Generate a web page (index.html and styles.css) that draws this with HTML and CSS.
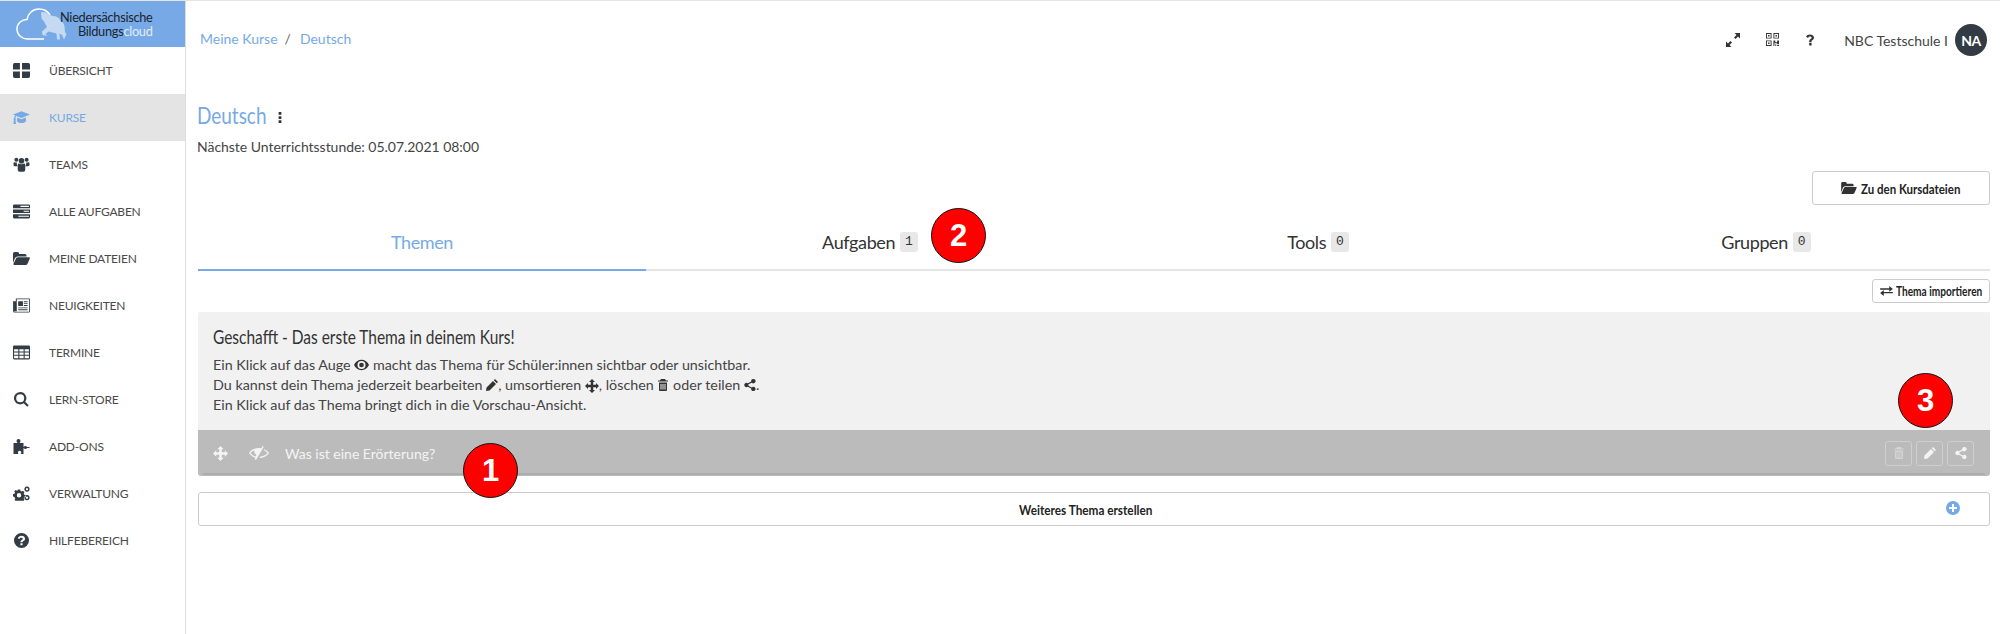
FILE: index.html
```html
<!DOCTYPE html>
<html lang="de">
<head>
<meta charset="utf-8">
<title>Deutsch</title>
<link rel="stylesheet" href="styles.css">
</head>
<body>
<div class="app">
  <aside class="sidebar">
    <div class="logo">
      <svg class="logo-mark" viewBox="0 0 52 32"><path class="cloud" d="M34 7C31.500 3 27.500 1 23 1 16.500 1 12 5.500 11 11.500 5.500 11.500 1 15.500 1 21 1 27 6 31 11.500 31H28"/><path class="horse" d="M25 4l5 .5 4 2.500 3 1c3.500 0 6 1.500 8 5 2 1 3 3 3.500 5l.5 6 1.500 2-2.500 5.500-2-4.500-2.500-1.500 .5 6-3 0-.5-6-8-2-3 2.500 2 2-5-1-.5-3.500 5-4.500-3-5.500-2.500-3z"/></svg>
      <div class="logo-text"><span>Niedersächsische</span><span>Bildungs<em>cloud</em></span></div>
    </div>
    <nav class="nav">
      <a class="nav-item"><svg class="nav-ico" viewBox="0 0 16 14"><path d="M0 1.500q0-1.500 1.500-1.500h5v6H0zM8.500 0h6q1.500 0 1.500 1.500V6H8.500zM0 8h6.500v6h-5Q0 14 0 12.500zM8.500 8H16v4.500q0 1.500-1.500 1.500h-6z"/></svg>ÜBERSICHT</a>
      <a class="nav-item active"><svg class="nav-ico" viewBox="0 0 20 15"><path d="M10 0l10 4-10 4-6-2.400q-1 1-1.200 2.800.6.500.6 1.100 0 .5-.4.900l.5 4.600H.5L1 10.400Q.6 10 .6 9.500q0-.7.7-1.100Q1.500 6.200 2.700 5L0 4zM5 7.600l5 2 5-2 .4 3.900C15 13 12.500 14 10 14s-5-1-5.400-2.500z"/></svg>KURSE</a>
      <a class="nav-item"><svg class="nav-ico" viewBox="0 0 17 16"><circle cx="3" cy="3" r="2.100"/><circle cx="14" cy="3" r="2.100"/><circle cx="8.500" cy="4" r="3"/><path d="M0 6.500q0-1 1-1 1.200.6 2.500.3-.3 3 1 4H1.500Q0 9.800 0 8.500zM17 6.500q0-1-1-1-1.200.6-2.500.3.300 3-1 4h2.500q2 0 2-1.300zM4.500 8.500q0-1.500 1.200-1.500 2.800 1.600 5.600 0 1.200 0 1.200 1.500v5q0 2-2 2.300H6.500q-2-.3-2-2.300z"/></svg>TEAMS</a>
      <a class="nav-item"><svg class="nav-ico" viewBox="0 0 16 13"><path d="M1 0h14q1 0 1 1v2.500H0V1q0-1 1-1zM0 4.500h16V8H0zM0 9h16v3q0 1-1 1H1q-1 0-1-1z"/><path class="cut" d="M7 1.200h8v1H7zM10 5.800h5v1h-5zM5 10.500h10v1H5z"/></svg>ALLE AUFGABEN</a>
      <a class="nav-item"><svg class="nav-ico" viewBox="0 0 17 13"><path d="M0 11V1.500Q0 0 1.500 0h3Q6 0 6 1.500V2h6q1.500 0 1.500 1.500V4.500H4.500Q3 4.500 2 6zM3.200 6q.6-.7 1.500-.7H16q1.300 0 .8 1.200l-2.300 5.200q-.5 1.300-1.800 1.300H1.500Q0 13 .5 11.800z"/></svg>MEINE DATEIEN</a>
      <a class="nav-item"><svg class="nav-ico" viewBox="0 0 18 15"><path fill-rule="evenodd" d="M3 0h14q1 0 1 1v12.500q0 1.500-1.500 1.500h-15Q0 15 0 13.500V3h3zM4 1v12.500H1V4H.9v9.500q0 .6.600.6h15q.6 0 .6-.6V1zM5.500 3h5v5h-5zM11.500 3h4v1h-4zM11.500 5h4v1h-4zM11.500 7h4v1h-4zM5.500 9.500h10v1h-10zM5.500 11.500h10v1h-10z"/></svg>NEUIGKEITEN</a>
      <a class="nav-item"><svg class="nav-ico" viewBox="0 0 16 13"><path fill-rule="evenodd" d="M1 0h14q1 0 1 1v11q0 1-1 1H1q-1 0-1-1V1q0-1 1-1zM1 3.500V5.500h4V3.500zM6 3.500V5.500h4V3.500zM11 3.500V5.500h4V3.500zM1 6.500V8.500h4V6.500zM6 6.500V8.500h4V6.500zM11 6.500V8.500h4V6.500zM1 9.500V12h4V9.500zM6 9.500V12h4V9.500zM11 9.500V12h4V9.500z"/></svg>TERMINE</a>
      <a class="nav-item"><svg class="nav-ico" viewBox="0 0 15 15"><path fill-rule="evenodd" d="M6.200 0a6.200 6.200 0 0 1 5 9.800l3.500 3.500-1.500 1.500-3.500-3.500A6.200 6.200 0 1 1 6.200 0zm0 2.200a4 4 0 1 0 0 8 4 4 0 0 0 0-8z"/></svg>LERN-STORE</a>
      <a class="nav-item"><svg class="nav-ico" viewBox="0 0 16 15"><path d="M0 4h4Q3 3 3 2a2 2 0 0 1 4 0q0 1-1 2h4v4q1-1 2-1 1 0 1.500 1H16v1h-2.500q-.5 1-1.500 1-1 0-2-1v6H7q.8-.8.800-1.500a1.700 1.700 0 0 0-3.400 0Q4.400 14 5 15H0z"/></svg>ADD-ONS</a>
      <a class="nav-item"><svg class="nav-ico" viewBox="0 0 17 14"><path fill-rule="evenodd" d="M5 3h2.200l.3 1.500 1.200.5 1.300-.8 1.500 1.500-.8 1.300.5 1.200 1.500.3v2.200l-1.500.3-.5 1.200.8 1.300-1 .8H2.500l-1-1 .8-1.200-.5-1.200L0 9.800V7.600l1.500-.3.500-1.200L1.200 5l1.500-1.500 1.300.8.700-.5zM6 6.500a2.200 2.200 0 1 0 0 4.400 2.200 2.200 0 0 0 0-4.400zM14 0a2.600 2.600 0 1 1-.01 0zm0 1.500a1.100 1.100 0 1 0 .01 0zM14 8.500a2.600 2.600 0 1 1-.01 0zm0 1.500a1.100 1.100 0 1 0 .01 0z"/></svg>VERWALTUNG</a>
      <a class="nav-item"><svg class="nav-ico" viewBox="0 0 14 14"><path fill-rule="evenodd" d="M7 0a7 7 0 1 1 0 14A7 7 0 0 1 7 0zM6 9.500v2h2v-2zM7 2.500C5.300 2.500 4 3.300 3.500 4.800l1.500.9C5.400 4.800 6 4.400 6.900 4.400c.8 0 1.300.4 1.300 1 0 .6-.5.900-1.200 1.300C6.300 7.100 6 7.600 6 8.700h2c0-.6.300-.8 1-1.200.9-.6 1.300-1.200 1.300-2.200 0-1.700-1.500-2.800-3.300-2.800z"/></svg>HILFEBEREICH</a>
    </nav>
  </aside>

  <main class="main">
    <header class="topbar">
      <div class="crumbs"><a>Meine Kurse</a><span class="sep">/</span><a>Deutsch</a></div>
      <div class="top-actions">
        <svg class="top-ico exp" viewBox="0 0 14 14"><path d="M8.500 0H14v5.500L12 3.500 9.500 6 8 4.500 10.500 2zM0 14V8.500L2 10.500 4.500 8 6 9.500 3.500 12 5.500 14z"/></svg>
        <svg class="top-ico qr" viewBox="0 0 14 14"><path fill-rule="evenodd" d="M0 0h6v6H0zM1 1v4h4V1zM2.200 2.200h1.600v1.600H2.200zM8 0h6v6H8zM9 1v4h4V1zM10.200 2.200h1.600v1.600h-1.600zM0 8h6v6H0zM1 9v4h4V9zM2.200 10.200h1.600v1.600H2.200zM8 8h2v2h2V8h2v4h-2v-1H9v3H8zM10 12h1v2h-1zM12 13h2v1h-2z"/></svg>
        <svg class="top-ico q" viewBox="0 0 10 14"><path d="M4 10.500h3V14H4zM5 0c3 0 5 1.700 5 4 0 1.800-1 2.700-2.200 3.400-.7.500-.9.800-.9 2H4c0-2 .5-2.900 1.800-3.700.9-.6 1.200-1 1.200-1.600 0-.8-.7-1.400-1.800-1.400-1.200 0-2 .6-2.600 1.800L0 2.800C1 1 2.700 0 5 0z"/></svg>
        <span class="school">NBC Testschule I</span>
        <span class="avatar">NA</span>
      </div>
    </header>

    <section class="course-head">
      <h1 class="course-title"><span class="narrow title-text">Deutsch</span><svg class="dots" viewBox="0 0 4 12"><path d="M.5 0h3v3h-3zM.5 4.500h3v3h-3zM.5 9h3v3h-3z"/></svg></h1>
      <p class="next-lesson">Nächste Unterrichtsstunde: 05.07.2021 08:00</p>
    </section>

    <div class="file-row">
      <a class="btn btn-files"><svg class="btn-ico" viewBox="0 0 17 13"><path d="M0 11V1.500Q0 0 1.500 0h3Q6 0 6 1.500V2h6q1.500 0 1.500 1.500V4.500H4.500Q3 4.500 2 6zM3.200 6q.6-.7 1.500-.7H16q1.300 0 .8 1.200l-2.300 5.200q-.5 1.300-1.800 1.300H1.500Q0 13 .5 11.800z"/></svg><span class="narrow files-text">Zu den Kursdateien</span></a>
    </div>

    <div class="tabs">
      <a class="tab active">Themen</a>
      <a class="tab">Aufgaben<span class="count">1</span></a>
      <a class="tab">Tools<span class="count">0</span></a>
      <a class="tab">Gruppen<span class="count">0</span></a>
    </div>

    <div class="import-row">
      <a class="btn btn-import"><svg class="btn-ico sm" viewBox="0 0 14 11"><path d="M0 2.500h10V0l4 3.200-4 3.200V4H0zM14 6.500H4V4.300L0 7.800l4 3.200V8h10z"/></svg><span class="narrow import-text">Thema importieren</span></a>
    </div>

    <section class="hint">
      <h2 class="hint-title"><span class="narrow">Geschafft - Das erste Thema in deinem Kurs!</span></h2>
      <p class="hint-line">Ein Klick auf das Auge <svg class="inl eye" viewBox="0 0 16 11"><path fill-rule="evenodd" d="M8 0c3.500 0 6.500 2.200 8 5.500C14.500 8.800 11.500 11 8 11S1.500 8.800 0 5.500C1.500 2.200 4.500 0 8 0zM8 1.200a4.300 4.300 0 1 0 0 8.600 4.300 4.300 0 0 0 0-8.600zM8 3a2.500 2.500 0 1 1 0 5 2.500 2.500 0 0 1 0-5z"/></svg> macht das Thema für Schüler:innen sichtbar oder unsichtbar.</p>
      <p class="hint-line">Du kannst dein Thema jederzeit bearbeiten <svg class="inl" viewBox="0 0 12 12"><path d="M9 0l3 3-1.200 1.200-3-3zM7 2l3 3-6.500 6.500L0 12l.5-3.500z"/></svg>, umsortieren <svg class="inl move" viewBox="0 0 14 14"><path d="M7 0l3 3H8.200v2.800H11V4l3 3-3 3V8.200H8.200V11H10l-3 3-3-3h1.800V8.200H3V10L0 7l3-3v1.800h2.800V3H4z"/></svg>, löschen <svg class="inl" viewBox="0 0 10 12"><path fill-rule="evenodd" d="M3 0h4l1 1.500h2v1H0v-1h2zM1 3.500h8V11q0 1-1 1H2q-1 0-1-1zM2.500 5v5.500h1V5zM4.500 5v5.500h1V5zM6.500 5v5.500h1V5z"/></svg> oder teilen <svg class="inl" viewBox="0 0 12 12"><path d="M9.500 0a2.200 2.200 0 1 1-1.700 3.700L4.400 5.300a2 2 0 0 1 0 1.400l3.400 1.700a2.200 2.200 0 1 1-.6 1.100L3.800 7.800a2.200 2.200 0 1 1 0-3.600l3.400-1.700A2.200 2.200 0 0 1 9.500 0z"/></svg>.</p>
      <p class="hint-line">Ein Klick auf das Thema bringt dich in die Vorschau-Ansicht.</p>
    </section>

    <div class="topic">
      <svg class="topic-move" viewBox="0 0 14 14"><path d="M7 0l3 3H8.200v2.800H11V4l3 3-3 3V8.200H8.200V11H10l-3 3-3-3h1.800V8.200H3V10L0 7l3-3v1.800h2.800V3H4z"/></svg>
      <svg class="topic-eye" viewBox="0 0 20 14"><path fill-rule="evenodd" d="M13.500 0l1.300.8L7 14l-1.300-.8.700-1.300C3.500 10.800 1.300 9 0 7c1.800-3 5.600-5 10-5 .9 0 1.800.1 2.600.3zM5.500 4.500C3.700 5.100 2.300 6 1.500 7c1 1.400 2.700 2.700 5 3.600L7.500 9C5.800 7.900 5 6 5.500 4.500zM15 3.300c2.200.8 3.900 2.100 5 3.700-1.700 2.800-5.300 5-9.500 5l1-1.400C15 10.200 17.200 8.800 18.500 7c-.9-1.200-2.100-2.100-3.500-2.800z"/></svg>
      <span class="topic-name">Was ist eine Erörterung?</span>
      <div class="topic-actions">
        <span class="act dim"><svg viewBox="0 0 10 12"><path fill-rule="evenodd" d="M3 0h4l1 1.500h2v1H0v-1h2zM1 3.500h8V11q0 1-1 1H2q-1 0-1-1zM2.500 5v5.500h1V5zM4.500 5v5.500h1V5zM6.500 5v5.500h1V5z"/></svg></span>
        <span class="act"><svg viewBox="0 0 12 12"><path d="M9 0l3 3-1.200 1.200-3-3zM7 2l3 3-6.500 6.500L0 12l.5-3.500z"/></svg></span>
        <span class="act"><svg viewBox="0 0 12 12"><path d="M9.500 0a2.200 2.200 0 1 1-1.700 3.700L4.400 5.300a2 2 0 0 1 0 1.400l3.400 1.700a2.200 2.200 0 1 1-.6 1.100L3.800 7.800a2.200 2.200 0 1 1 0-3.600l3.400-1.700A2.200 2.200 0 0 1 9.500 0z"/></svg></span>
      </div>
    </div>

    <a class="btn btn-add"><span class="narrow add-text">Weiteres Thema erstellen</span><svg class="plus" viewBox="0 0 14 14"><path fill-rule="evenodd" d="M7 0a7 7 0 1 1 0 14A7 7 0 0 1 7 0zM6 3v3H3v2h3v3h2V8h3V6H8V3z"/></svg></a>

    <span class="mark m1">1</span>
    <span class="mark m2">2</span>
    <span class="mark m3">3</span>
  </main>
</div>
</body>
</html>
```

FILE: styles.css
```css
* { box-sizing: border-box; }
html, body { margin: 0; height: 100%; }
body { font-family: "Lato", "Open Sans", sans-serif; color: #444; background: #fff; font-size: 14px; }
p, h1, h2 { margin: 0; font-weight: normal; }
svg { fill: currentColor; display: block; }

.narrow { display: inline-block; white-space: nowrap; transform-origin: left center; transform: scaleX(.82); }

.app { display: flex; min-height: 634px; border-top: 1px solid #e4e4e4; }

.sidebar { width: 186px; flex: none; border-right: 1px solid #ddd; }
.logo { height: 46px; background: #76a9e6; display: flex; align-items: center; padding-left: 16px; }
.logo-mark { width: 52px; height: 32px; flex: none; }
.logo-mark .cloud { fill: none; stroke: #fff; stroke-width: 1.500; }
.logo-mark .horse { fill: #c4d9f2; }
.logo-text { display: flex; flex-direction: column; align-items: flex-end; font-size: 12.800px; line-height: 14px; color: #1c2530; margin-left: -8px; letter-spacing: -.3px; }
.logo-text em { font-style: normal; color: #e2edfa; }

.nav { display: flex; flex-direction: column; }
.nav-item { height: 47px; display: flex; align-items: center; padding-left: 13px; padding-bottom: 1px; font-size: 12px; color: #4a4a4a; letter-spacing: -.2px; }
.nav-ico { width: 17px; height: 15px; margin-right: 19px; color: #333c44; flex: none; }
.nav-item.active { background: #e4e4e4; color: #76a9e6; }
.nav-item.active .nav-ico { color: #76a9e6; }
.cut { fill: #fff; }

.main { position: relative; flex: 1; padding: 0 10px 0 12px; min-width: 0; }

.topbar { height: 78px; display: flex; align-items: center; justify-content: space-between; }
.crumbs { display: flex; align-items: center; color: #76a9e6; font-size: 14px; padding-left: 2px; margin-top: -3px; }
.sep { color: #666; margin: 0 9px 0 7px; }
.top-actions { display: flex; align-items: center; }
.top-ico { width: 14px; height: 14px; color: #333; margin-right: 26px; }
.top-ico.exp { margin-top: -1px; }
.top-ico.qr { width: 13px; height: 13px; margin-right: 27px; margin-top: -1px; }
.top-ico.q { width: 8px; height: 12px; margin-right: 30px; }
.school { font-size: 14px; color: #444; margin-right: 7px; }
.avatar { width: 32px; height: 32px; border-radius: 50%; background: #333c44; color: #fff; font-size: 14px; font-weight: 700; letter-spacing: -.5px; display: flex; align-items: center; justify-content: center; margin-right: 3px; }

.course-head { padding-top: 24px; height: 78px; margin-top: -3px; margin-left: -1px; }
.course-title { font-size: 24px; line-height: 30px; color: #76a9e6; display: flex; align-items: center; }
.title-text { width: 66px; transform: scaleX(.79); }
.dots { width: 4px; height: 11px; margin-left: 15px; margin-top: 4px; color: #333; }
.next-lesson { font-size: 14px; line-height: 20px; margin-top: 7px; color: #444; letter-spacing: -.03px; }

.file-row { display: flex; justify-content: flex-end; margin-top: 17px; }
.btn { display: flex; align-items: center; justify-content: center; background: #fff; border: 1px solid #ccc; border-radius: 3px; color: #222; font-weight: 700; }
.btn-files { width: 178px; height: 34px; font-size: 14px; }
.files-text { width: 100px; }
.btn-ico { width: 16px; height: 12px; margin-right: 4px; color: #333; flex: none; }
.btn-ico.sm { width: 13px; height: 10px; margin-right: 3px; }

.tabs { display: flex; height: 66px; border-bottom: 2px solid #e5e5e5; }
.tab { flex: 1; display: flex; align-items: center; justify-content: center; padding-top: 9px; font-size: 18px; letter-spacing: -.4px; color: #333; margin-bottom: -2px; border-bottom: 2px solid transparent; }
.tab.active { color: #76a9e6; border-bottom-color: #76a9e6; }
.count { background: #e8e8e8; border-radius: 3px; font-family: "Liberation Mono", monospace; font-size: 13px; letter-spacing: 0; padding: 3px 5px; margin-left: 5px; color: #333; line-height: 14px; }

.import-row { display: flex; justify-content: flex-end; margin-top: 8px; }
.btn-import { width: 118px; height: 24px; font-size: 12.500px; }
.import-text { width: 86px; transform: scaleX(.81); }

.hint { margin-top: 9px; background: #f1f1f1; padding: 13px 15px 0; height: 118px; border-radius: 2px 2px 0 0; }
.hint-title { font-size: 19px; line-height: 24px; color: #333; margin-bottom: 6px; }
.hint-title .narrow { transform: scaleX(.814); }
.hint-line { font-size: 14.300px; line-height: 20px; color: #444; }
.inl { display: inline-block; width: 12px; height: 12px; vertical-align: -1px; color: #333; }
.inl.eye { width: 15px; }
.inl.move { width: 14px; height: 14px; vertical-align: -3px; }

.topic { position: relative; height: 46px; background: #bbb; border-radius: 0 0 3px 3px; display: flex; align-items: center; padding-left: 15px; padding-right: 16px; color: #f4f4f4; }
.topic::after { content: ""; position: absolute; left: 5px; right: 5px; bottom: 1px; height: 2px; background: #adadad; }
.topic-move { width: 15px; height: 15px; }
.topic-eye { width: 20px; height: 14px; margin-left: 21px; }
.topic-name { margin-left: 16px; font-size: 14px; }
.topic-actions { margin-left: auto; display: flex; gap: 4px; }
.act { width: 27px; height: 25px; border: 1px solid #cfcfcf; border-radius: 3px; display: flex; align-items: center; justify-content: center; }
.act svg { width: 12px; height: 12px; }
.act.dim svg { color: #d4d4d4; }

.btn-add { position: relative; height: 34px; margin-top: 16px; padding-right: 16px; font-size: 14px; }
.add-text { width: 134px; transform: scaleX(.84); }
.plus { position: absolute; right: 29px; top: 8px; width: 14px; height: 14px; color: #76a9e6; }

.mark { position: absolute; width: 55px; height: 55px; border-radius: 50%; background: #f00; border: 1px solid #111; color: #fff; font-family: "Liberation Sans", sans-serif; font-weight: 700; font-size: 31px; display: flex; align-items: center; justify-content: center; }
.m1 { left: 277px; top: 442px; }
.m2 { left: 745px; top: 207px; }
.m3 { left: 1712px; top: 372px; }
```
